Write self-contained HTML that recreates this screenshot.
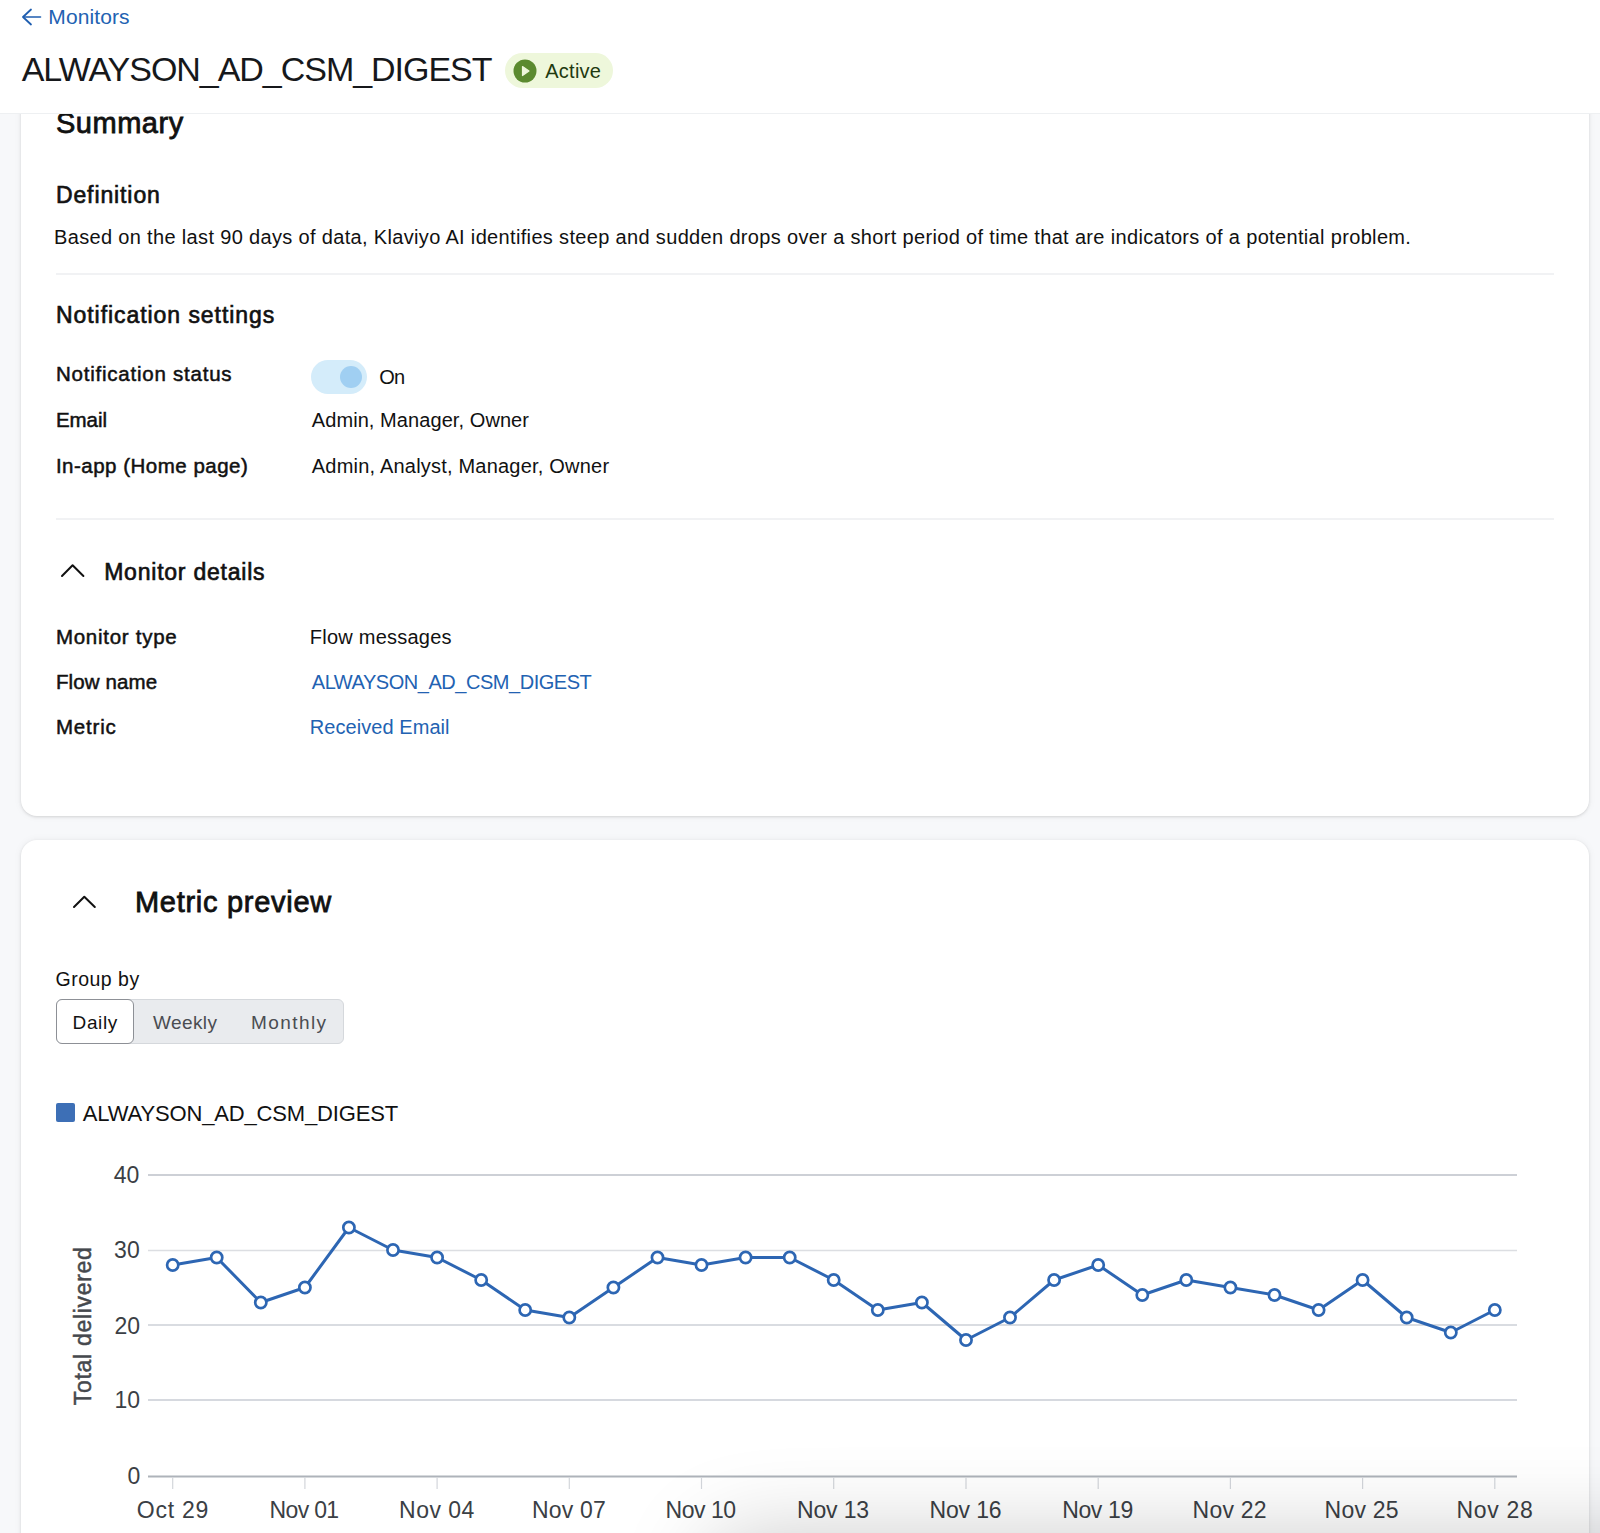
<!DOCTYPE html>
<html><head><meta charset="utf-8">
<style>
html,body{margin:0;padding:0;}
body{width:1600px;height:1533px;overflow:hidden;position:relative;background:#f7f8fa;font-family:"Liberation Sans",sans-serif;color:#111;}
.t{position:absolute;line-height:1;white-space:nowrap;top:calc(var(--b) * 1px - 0.8464em);}
.b{font-weight:normal;-webkit-text-stroke:0.5px currentColor;}
.b2{-webkit-text-stroke:0.8px currentColor;}
.b3{-webkit-text-stroke:0.65px currentColor;}
.blue{color:#2262b2;}
.cl{color:#3b3f45;}
#header{position:absolute;left:0;top:0;width:1600px;height:113px;background:#fff;border-bottom:1px solid #eef0f2;z-index:5;}
.card{position:absolute;left:21px;width:1568px;background:#fff;border-radius:16px;box-shadow:0 1px 3px rgba(0,0,0,0.13),0 0 8px rgba(0,0,0,0.05);}
#card1{top:40px;height:776px;}
#card2{top:840px;height:800px;}
.hr{position:absolute;left:56px;width:1498px;height:2px;background:#f1f2f4;}
</style></head>
<body>
<div id="header">
  <svg style="position:absolute;left:21px;top:7.6px" width="22" height="18" viewBox="0 0 22 18"><path d="M10 1.5 L2 9 L10 16.5" fill="none" stroke="#1f5eb0" stroke-width="1.8" stroke-linecap="round" stroke-linejoin="round"/><path d="M2.5 9 H19.5" fill="none" stroke="#1f5eb0" stroke-width="1.6" stroke-linecap="round"/></svg>
  <div id="t1" class="t blue" style="--b:24.2;left:48.3px;font-size:21px;letter-spacing:0.098px">Monitors</div>
  <div id="t2" class="t" style="--b:80.5;left:21.7px;font-size:34px;color:#16181b;letter-spacing:-1.035px">ALWAYSON_AD_CSM_DIGEST</div>
  <div style="position:absolute;left:505px;top:53px;width:108px;height:35px;border-radius:18px;background:#eef7db;"></div>
  <svg style="position:absolute;left:513px;top:59px" width="24" height="24" viewBox="0 0 24 24"><circle cx="12" cy="12" r="11.5" fill="#5b8a2f"/><path d="M9.5 7.5 L16 12 L9.5 16.5 Z" fill="#eef7db" stroke="#eef7db" stroke-width="1.2" stroke-linejoin="round"/></svg>
  <div id="t3" class="t" style="--b:78;left:545.25px;font-size:20px;color:#1f3a10;letter-spacing:0.25px">Active</div>
</div>

<div id="card1" class="card">
</div>
<div id="t4" class="t b b2" style="--b:133.4;left:56px;font-size:29px;letter-spacing:0.522px">Summary</div>
<div id="t5" class="t b b3" style="--b:203.4;left:55.9px;font-size:23px;letter-spacing:0.898px">Definition</div>
<div id="t6" class="t" style="--b:244;left:54px;font-size:20px;letter-spacing:0.337px">Based on the last 90 days of data, Klaviyo AI identifies steep and sudden drops over a short period of time that are indicators of a potential problem.</div>
<div class="hr" style="top:273px"></div>
<div id="t7" class="t b b3" style="--b:323.3;left:56px;font-size:23px;letter-spacing:0.94px">Notification settings</div>

<div id="t8" class="t b" style="--b:381;left:56px;font-size:20.5px;letter-spacing:0.765px">Notification status</div>
<div style="position:absolute;left:311px;top:360px;width:56px;height:34px;border-radius:17px;background:#d4ecfa;"></div>
<div style="position:absolute;left:340px;top:366px;width:22px;height:22px;border-radius:11px;background:#a0cff2;"></div>
<div id="t9" class="t" style="--b:384.2;left:379.3px;font-size:20px;letter-spacing:-0.9px">On</div>

<div id="t10" class="t b" style="--b:427.4;left:55.9px;font-size:20.5px;letter-spacing:-0.05px">Email</div>
<div id="t11" class="t" style="--b:427.4;left:311.8px;font-size:20px;letter-spacing:0.075px">Admin, Manager, Owner</div>
<div id="t12" class="t b" style="--b:473;left:55.9px;font-size:20.5px;letter-spacing:0.499px">In-app (Home page)</div>
<div id="t13" class="t" style="--b:473;left:311.8px;font-size:20px;letter-spacing:0.207px">Admin, Analyst, Manager, Owner</div>
<div class="hr" style="top:518px"></div>

<svg style="position:absolute;left:58px;top:560px" width="30" height="20" viewBox="0 0 30 20"><path d="M4 16 L14.6 5.3 L25.4 16" fill="none" stroke="#111" stroke-width="2" stroke-linecap="round" stroke-linejoin="round"/></svg>
<div id="t14" class="t b b3" style="--b:580;left:104.2px;font-size:23px;letter-spacing:0.775px">Monitor details</div>

<div id="t15" class="t b" style="--b:644.2;left:55.9px;font-size:20.5px;letter-spacing:0.727px">Monitor type</div>
<div id="t16" class="t" style="--b:644.2;left:309.8px;font-size:20px;letter-spacing:0.233px">Flow messages</div>
<div id="t17" class="t b" style="--b:689.2;left:55.9px;font-size:20.5px;letter-spacing:0.127px">Flow name</div>
<div id="t18" class="t blue" style="--b:689.2;left:311.8px;font-size:20px;letter-spacing:-0.461px">ALWAYSON_AD_CSM_DIGEST</div>
<div id="t19" class="t b" style="--b:734.2;left:55.9px;font-size:20.5px;letter-spacing:0.82px">Metric</div>
<div id="t20" class="t blue" style="--b:734.2;left:309.8px;font-size:20px;letter-spacing:0.063px">Received Email</div>

<div id="card2" class="card"></div>
<svg style="position:absolute;left:70px;top:892px" width="30" height="20" viewBox="0 0 30 20"><path d="M4 15 L14.3 4.8 L24.8 15" fill="none" stroke="#111" stroke-width="2" stroke-linecap="round" stroke-linejoin="round"/></svg>
<div id="t21" class="t b b2" style="--b:912.5;left:135px;font-size:29px;letter-spacing:0.714px">Metric preview</div>
<div id="t22" class="t" style="--b:986.6;left:55.6px;font-size:19.5px;letter-spacing:0.482px">Group by</div>

<div style="position:absolute;left:56px;top:999px;width:288px;height:45px;border-radius:6px;background:#e9ebee;border:1.5px solid #d5d8dc;box-sizing:border-box;"></div>
<div style="position:absolute;left:56px;top:999px;width:78px;height:45px;border-radius:6px;background:#fff;border:1.5px solid #8d9096;box-sizing:border-box;"></div>
<div id="t23" class="t" style="--b:1029.4;left:72.6px;font-size:19px;letter-spacing:0.6px">Daily</div>
<div id="t24" class="t" style="--b:1029.4;left:153px;font-size:19px;color:#4a4d52;letter-spacing:0.4px">Weekly</div>
<div id="t25" class="t" style="--b:1029.4;left:251px;font-size:19px;color:#4a4d52;letter-spacing:1.429px">Monthly</div>

<div style="position:absolute;left:56px;top:1103px;width:19px;height:19px;border-radius:2px;background:#3d6fb6"></div>
<div id="t26" class="t" style="--b:1121.6;left:82.8px;font-size:22px;letter-spacing:-0.157px">ALWAYSON_AD_CSM_DIGEST</div>

<svg id="chart" style="position:absolute;left:0;top:1140px" width="1600" height="393" viewBox="0 1140 1600 393">
<style>.yt{font-family:"Liberation Sans",sans-serif;font-size:23px;fill:#45484d;stroke:#45484d;stroke-width:0.5px;letter-spacing:0.7px}</style>
<line x1="148" y1="1175" x2="1517" y2="1175" stroke="#bcc1c9" stroke-width="1.7"/>
<line x1="148" y1="1250.4" x2="1517" y2="1250.4" stroke="#dcdee2" stroke-width="1.5"/>
<line x1="148" y1="1325" x2="1517" y2="1325" stroke="#ccd0d7" stroke-width="1.4"/>
<line x1="148" y1="1400" x2="1517" y2="1400" stroke="#c9cdd4" stroke-width="1.4"/>
<line x1="148" y1="1476.5" x2="1517" y2="1476.5" stroke="#aeb3ba" stroke-width="2"/>
<line x1="172.7" y1="1477.5" x2="172.7" y2="1489" stroke="#d3d6db" stroke-width="1.2"/>
<line x1="304.9" y1="1477.5" x2="304.9" y2="1489" stroke="#d3d6db" stroke-width="1.2"/>
<line x1="437.1" y1="1477.5" x2="437.1" y2="1489" stroke="#d3d6db" stroke-width="1.2"/>
<line x1="569.3" y1="1477.5" x2="569.3" y2="1489" stroke="#d3d6db" stroke-width="1.2"/>
<line x1="701.5" y1="1477.5" x2="701.5" y2="1489" stroke="#d3d6db" stroke-width="1.2"/>
<line x1="833.7" y1="1477.5" x2="833.7" y2="1489" stroke="#d3d6db" stroke-width="1.2"/>
<line x1="966.0" y1="1477.5" x2="966.0" y2="1489" stroke="#d3d6db" stroke-width="1.2"/>
<line x1="1098.2" y1="1477.5" x2="1098.2" y2="1489" stroke="#d3d6db" stroke-width="1.2"/>
<line x1="1230.4" y1="1477.5" x2="1230.4" y2="1489" stroke="#d3d6db" stroke-width="1.2"/>
<line x1="1362.6" y1="1477.5" x2="1362.6" y2="1489" stroke="#d3d6db" stroke-width="1.2"/>
<line x1="1494.8" y1="1477.5" x2="1494.8" y2="1489" stroke="#d3d6db" stroke-width="1.2"/>
<text transform="translate(91.0 1325.8) rotate(-90)" text-anchor="middle" class="yt">Total delivered</text>
<path d="M172.7 1265.0 L216.7 1257.5 L260.8 1302.5 L304.9 1287.5 L348.9 1227.5 L393.0 1250.0 L437.1 1257.5 L481.2 1280.0 L525.2 1310.0 L569.3 1317.5 L613.4 1287.5 L657.5 1257.5 L701.5 1265.0 L745.6 1257.5 L789.7 1257.5 L833.7 1280.0 L877.8 1310.0 L921.9 1302.5 L966.0 1340.0 L1010.0 1317.5 L1054.1 1280.0 L1098.2 1265.0 L1142.3 1295.0 L1186.3 1280.0 L1230.4 1287.5 L1274.5 1295.0 L1318.6 1310.0 L1362.6 1280.0 L1406.7 1317.5 L1450.8 1332.5 L1494.8 1310.0" fill="none" stroke="#2d66b3" stroke-width="3" stroke-linejoin="round"/>
<circle cx="172.7" cy="1265.0" r="5.6" fill="#fff" stroke="#2d66b3" stroke-width="2.7"/>
<circle cx="216.7" cy="1257.5" r="5.6" fill="#fff" stroke="#2d66b3" stroke-width="2.7"/>
<circle cx="260.8" cy="1302.5" r="5.6" fill="#fff" stroke="#2d66b3" stroke-width="2.7"/>
<circle cx="304.9" cy="1287.5" r="5.6" fill="#fff" stroke="#2d66b3" stroke-width="2.7"/>
<circle cx="348.9" cy="1227.5" r="5.6" fill="#fff" stroke="#2d66b3" stroke-width="2.7"/>
<circle cx="393.0" cy="1250.0" r="5.6" fill="#fff" stroke="#2d66b3" stroke-width="2.7"/>
<circle cx="437.1" cy="1257.5" r="5.6" fill="#fff" stroke="#2d66b3" stroke-width="2.7"/>
<circle cx="481.2" cy="1280.0" r="5.6" fill="#fff" stroke="#2d66b3" stroke-width="2.7"/>
<circle cx="525.2" cy="1310.0" r="5.6" fill="#fff" stroke="#2d66b3" stroke-width="2.7"/>
<circle cx="569.3" cy="1317.5" r="5.6" fill="#fff" stroke="#2d66b3" stroke-width="2.7"/>
<circle cx="613.4" cy="1287.5" r="5.6" fill="#fff" stroke="#2d66b3" stroke-width="2.7"/>
<circle cx="657.5" cy="1257.5" r="5.6" fill="#fff" stroke="#2d66b3" stroke-width="2.7"/>
<circle cx="701.5" cy="1265.0" r="5.6" fill="#fff" stroke="#2d66b3" stroke-width="2.7"/>
<circle cx="745.6" cy="1257.5" r="5.6" fill="#fff" stroke="#2d66b3" stroke-width="2.7"/>
<circle cx="789.7" cy="1257.5" r="5.6" fill="#fff" stroke="#2d66b3" stroke-width="2.7"/>
<circle cx="833.7" cy="1280.0" r="5.6" fill="#fff" stroke="#2d66b3" stroke-width="2.7"/>
<circle cx="877.8" cy="1310.0" r="5.6" fill="#fff" stroke="#2d66b3" stroke-width="2.7"/>
<circle cx="921.9" cy="1302.5" r="5.6" fill="#fff" stroke="#2d66b3" stroke-width="2.7"/>
<circle cx="966.0" cy="1340.0" r="5.6" fill="#fff" stroke="#2d66b3" stroke-width="2.7"/>
<circle cx="1010.0" cy="1317.5" r="5.6" fill="#fff" stroke="#2d66b3" stroke-width="2.7"/>
<circle cx="1054.1" cy="1280.0" r="5.6" fill="#fff" stroke="#2d66b3" stroke-width="2.7"/>
<circle cx="1098.2" cy="1265.0" r="5.6" fill="#fff" stroke="#2d66b3" stroke-width="2.7"/>
<circle cx="1142.3" cy="1295.0" r="5.6" fill="#fff" stroke="#2d66b3" stroke-width="2.7"/>
<circle cx="1186.3" cy="1280.0" r="5.6" fill="#fff" stroke="#2d66b3" stroke-width="2.7"/>
<circle cx="1230.4" cy="1287.5" r="5.6" fill="#fff" stroke="#2d66b3" stroke-width="2.7"/>
<circle cx="1274.5" cy="1295.0" r="5.6" fill="#fff" stroke="#2d66b3" stroke-width="2.7"/>
<circle cx="1318.6" cy="1310.0" r="5.6" fill="#fff" stroke="#2d66b3" stroke-width="2.7"/>
<circle cx="1362.6" cy="1280.0" r="5.6" fill="#fff" stroke="#2d66b3" stroke-width="2.7"/>
<circle cx="1406.7" cy="1317.5" r="5.6" fill="#fff" stroke="#2d66b3" stroke-width="2.7"/>
<circle cx="1450.8" cy="1332.5" r="5.6" fill="#fff" stroke="#2d66b3" stroke-width="2.7"/>
<circle cx="1494.8" cy="1310.0" r="5.6" fill="#fff" stroke="#2d66b3" stroke-width="2.7"/>
</svg>
<div id="c1" class="t cl" style="--b:1518.6;left:136.8px;font-size:23px;letter-spacing:0.76px">Oct 29</div>
<div id="c2" class="t cl" style="--b:1518.6;left:269.6px;font-size:23px;letter-spacing:-0.68px">Nov 01</div>
<div id="c3" class="t cl" style="--b:1518.6;left:399.1px;font-size:23px;letter-spacing:0.44px">Nov 04</div>
<div id="c4" class="t cl" style="--b:1518.6;left:532.1px;font-size:23px;letter-spacing:0.16px">Nov 07</div>
<div id="c5" class="t cl" style="--b:1518.6;left:665.6px;font-size:23px;letter-spacing:-0.48px">Nov 10</div>
<div id="c6" class="t cl" style="--b:1518.6;left:797px;font-size:23px;letter-spacing:-0.16px">Nov 13</div>
<div id="c7" class="t cl" style="--b:1518.6;left:929.5px;font-size:23px;letter-spacing:-0.16px">Nov 16</div>
<div id="c8" class="t cl" style="--b:1518.6;left:1062.2px;font-size:23px;letter-spacing:-0.36px">Nov 19</div>
<div id="c9" class="t cl" style="--b:1518.6;left:1192.6px;font-size:23px;letter-spacing:0.2px">Nov 22</div>
<div id="c10" class="t cl" style="--b:1518.6;left:1324.6px;font-size:23px;letter-spacing:0.2px">Nov 25</div>
<div id="c11" class="t cl" style="--b:1518.6;left:1456.6px;font-size:23px;letter-spacing:0.64px">Nov 28</div>
<div id="y1" class="t cl" style="--b:1183;left:113.7px;font-size:23px;letter-spacing:0px">40</div>
<div id="y2" class="t cl" style="--b:1258.3;left:114.1px;font-size:23px;letter-spacing:0px">30</div>
<div id="y3" class="t cl" style="--b:1334.3;left:114.4px;font-size:23px;letter-spacing:0px">20</div>
<div id="y4" class="t cl" style="--b:1408.9;left:114.4px;font-size:23px;letter-spacing:0px">10</div>
<div id="y5" class="t cl" style="--b:1484;left:127.4px;font-size:23px;letter-spacing:0px">0</div>
<div id="shadow" style="position:absolute;left:720px;top:1548px;width:1200px;height:200px;border-radius:24px;background:#fff;box-shadow:0 0 90px 10px rgba(0,0,0,0.22);z-index:10"></div>
</body></html>
